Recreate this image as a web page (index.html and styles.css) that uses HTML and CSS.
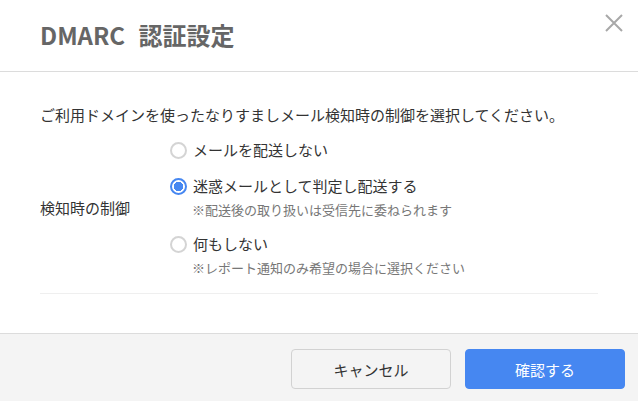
FILE: index.html
```html
<!DOCTYPE html>
<html lang="ja">
<head>
    <meta charset="utf-8">
    <title>DMARC 認証設定</title>
    <link rel="stylesheet" href="styles.css">
</head>
<body>

<div class="modal">
    <div class="modal-header">
        <h2 class="modal-title">DMARC 認証設定</h2>
        <button class="close-btn" aria-label="閉じる">
            <svg width="18" height="18" viewBox="0 0 18 18">
                <path d="M1 1 L17 17 M17 1 L1 17" stroke="#a8a8a8" stroke-width="2" fill="none"/>
            </svg>
        </button>
    </div>

    <div class="modal-body">
        <p class="intro">ご利用ドメインを使ったなりすましメール検知時の制御を選択してください。</p>

        <div class="setting-row">
            <div class="setting-label">検知時の制御</div>
            <div class="option-list">
                <label class="option">
                    <span class="option-main">
                        <input type="radio" name="dmarc_action" value="reject">
                        メールを配送しない
                    </span>
                </label>
                <label class="option">
                    <span class="option-main">
                        <input type="radio" name="dmarc_action" value="spam" checked>
                        迷惑メールとして判定し配送する
                    </span>
                    <span class="option-hint">※配送後の取り扱いは受信先に委ねられます</span>
                </label>
                <label class="option">
                    <span class="option-main">
                        <input type="radio" name="dmarc_action" value="none">
                        何もしない
                    </span>
                    <span class="option-hint">※レポート通知のみ希望の場合に選択ください</span>
                </label>
            </div>
        </div>
    </div>

    <div class="modal-footer">
        <button class="btn btn-cancel">キャンセル</button>
        <button class="btn btn-primary">確認する</button>
    </div>
</div>

</body>
</html>
```

FILE: styles.css
```css
/* modal ko simple rakha hai */
body {
    margin: 0;
    font-family: "Noto Sans CJK JP", "Noto Sans", sans-serif;
    color: #333;
    background: white;
}

.modal { position: relative; }

.modal-header {
    height: 71px;
    border-bottom: 1px solid #dcdcdc;
    padding-left: 40px;
    display: flex;
    align-items: center;
}
.modal-title {
    margin: 0;
    font-size: 24px;
    font-weight: bold;
    color: #666;
    line-height: 30px;
    padding-bottom: 2px;
    word-spacing: 8px;
}
.close-btn {
    position: absolute; top: 14px; right: 15px;
    width: 18px; height: 18px; padding: 0;
    border: none; background: none; cursor: pointer;
}
.close-btn svg { display: block; }

.modal-body { padding: 32px 40px 39px; }
.intro {
    margin: 0 0 12px;
    font-size: 15px;
    line-height: 22px;
}

.setting-row {
    display: flex;
    align-items: center;
    padding-bottom: 15px;
    border-bottom: 1px solid #efefef;
}
.setting-label {
    width: 130px;
    font-size: 15px;
    line-height: 22px;
}
.option-list {
    display: flex;
    flex-direction: column;
    gap: 12px;
}
.option { display: flex; flex-direction: column; cursor: pointer; }
.option-main {
    display: flex;
    align-items: center;
    font-size: 15px;
    line-height: 24px;
}
.option-hint {
    margin-top: 2px;
    padding-left: 22px;
    font-size: 13px;
    line-height: 20px;
    color: #777;
}

input[type="radio"] {
    appearance: none;
    width: 17px; height: 17px;
    margin: 0 6px 0 0;
    border: 2px solid #d4d4d4;
    border-radius: 50%;
    background: white;
}
input[type="radio"]:checked {
    border-color: #4687f1;
    background: radial-gradient(circle, #4687f1 0 4.5px, white 5px);
}

.modal-footer {
    border-top: 1px solid #dcdcdc;
    background: #f4f4f4;
    padding: 15px 13px 13px;
    display: flex;
    justify-content: flex-end;
    gap: 14px;
}
.btn {
    width: 160px; height: 40px;
    border-radius: 4px;
    font-family: inherit;
    font-size: 15px;
    cursor: pointer;
}
.btn-cancel { background: #f4f4f4; border: 1px solid #d2d2d2; color: #333; }
.btn-primary { background: #4687f1; border: 1px solid #4687f1; color: white; }
.btn-primary:hover { background: #3572d8; }
```
